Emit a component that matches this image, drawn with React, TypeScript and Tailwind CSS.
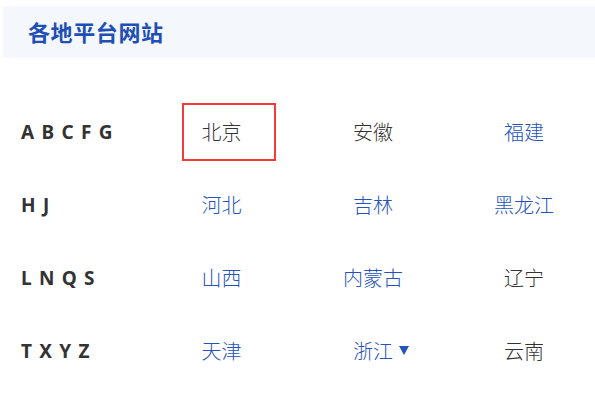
import React from 'react'

interface Row {
    letters: string
    cities: { name: string; blue?: boolean; active?: boolean; dropdown?: boolean }[]
}

const rows: Row[] = [
    {
        letters: 'A B C F G',
        cities: [{ name: '北京', active: true }, { name: '安徽' }, { name: '福建', blue: true }],
    },
    {
        letters: 'H J',
        cities: [{ name: '河北', blue: true }, { name: '吉林', blue: true }, { name: '黑龙江', blue: true }],
    },
    {
        letters: 'L N Q S',
        cities: [{ name: '山西', blue: true }, { name: '内蒙古', blue: true }, { name: '辽宁' }],
    },
    {
        letters: 'T X Y Z',
        cities: [{ name: '天津', blue: true }, { name: '浙江', blue: true, dropdown: true }, { name: '云南' }],
    },
]

const App: React.FC = () => {
    return (
        <div className="w-[595px] h-[400px] bg-white overflow-hidden font-['Noto_Sans','Noto_Sans_CJK_SC',sans-serif]">
            {/* Header band */}
            <div className="mt-[6px] ml-[3px] h-[52px] bg-[#f4f7fc] flex items-center pl-[25px]">
                <h2 className="text-[22px] font-bold text-[#1f4fb4] leading-none tracking-[0.6px]">
                    各地平台网站
                </h2>
            </div>

            {/* Region grid */}
            <div className="mt-[38px] grid grid-cols-[146px_151px_152px_150px]">
                {rows.map((row) => (
                    <React.Fragment key={row.letters}>
                        <div className="h-[73px] flex items-center pl-[21px] text-[19px] font-bold text-[#333] tracking-[1.2px] whitespace-nowrap">
                            {row.letters}
                        </div>
                        {row.cities.map((city) => (
                            <div key={city.name} className="relative h-[73px] flex items-center justify-center">
                                {/* Selected highlight */}
                                {city.active && (
                                    <div className="absolute left-[36px] top-[7px] h-[58px] w-[94px] border-2 border-[#f53a3a]" />
                                )}
                                <span
                                    className={`relative whitespace-nowrap text-[20px] font-light ${
                                        city.blue ? 'text-[#2553b9]' : 'text-[#333]'
                                    }`}
                                >
                                    {city.name}
                                    {city.dropdown && (
                                        <svg
                                            width="10"
                                            height="9"
                                            viewBox="0 0 10 9"
                                            className="absolute left-full top-1/2 ml-[6px] mt-[-6px]"
                                        >
                                            <path d="M0 0 H10 L5 9 Z" fill="#2553b9" />
                                        </svg>
                                    )}
                                </span>
                            </div>
                        ))}
                    </React.Fragment>
                ))}
            </div>
        </div>
    )
}

export default App
